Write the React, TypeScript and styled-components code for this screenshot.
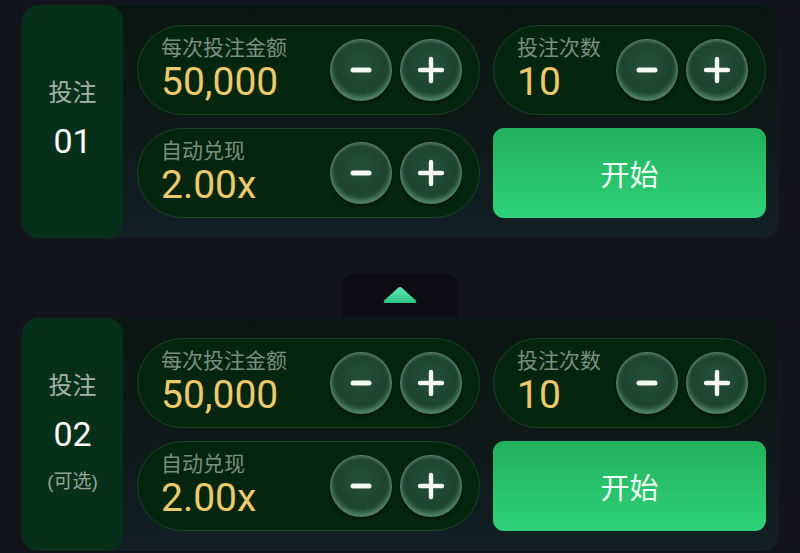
import styled, { createGlobalStyle } from 'styled-components';

const GlobalStyle = createGlobalStyle`
  html, body {
    margin: 0;
    padding: 0;
    background: #13131c;
  }
  body {
    font-family: "Liberation Sans", "Noto Sans CJK SC", sans-serif;
  }
`;

type BetSlot = {
  id: string;
  optional?: boolean;
};

const slots: BetSlot[] = [{ id: '01' }, { id: '02', optional: true }];

const MinusIcon = () => (
  <svg width="24" height="24" viewBox="0 0 24 24">
    <line x1="4" y1="12" x2="20" y2="12" stroke="#f4f7f4" strokeWidth="5" strokeLinecap="round" />
  </svg>
);

const PlusIcon = () => (
  <svg width="28" height="28" viewBox="0 0 28 28">
    <line x1="3" y1="14" x2="25" y2="14" stroke="#f4f7f4" strokeWidth="4.4" strokeLinecap="round" />
    <line x1="14" y1="3" x2="14" y2="25" stroke="#f4f7f4" strokeWidth="4.4" strokeLinecap="round" />
  </svg>
);

const Stepper = ({ label, value }: { label: string; value: string }) => (
  <Field>
    <FieldText>
      <Label>{label}</Label>
      <Value>{value}</Value>
    </FieldText>
    <RoundButton aria-label="decrease">
      <MinusIcon />
    </RoundButton>
    <RoundButton aria-label="increase">
      <PlusIcon />
    </RoundButton>
  </Field>
);

const BetPanel = ({ slot }: { slot: BetSlot }) => (
  <Panel>
    <Side>
      <SideTitle>投注</SideTitle>
      <SideNumber>{slot.id}</SideNumber>
      {slot.optional && <SideNote>(可选)</SideNote>}
    </Side>
    <Controls>
      <Stepper label="每次投注金额" value="50,000" />
      <Stepper label="投注次数" value="10" />
      <Stepper label="自动兑现" value="2.00x" />
      <StartButton>开始</StartButton>
    </Controls>
  </Panel>
);

const App = () => {
  return (
    <>
      <GlobalStyle />
      <Page>
        <BetPanel slot={slots[0]} />
        <Collapse>
          <svg width="36" height="18" viewBox="0 0 36 18">
            <defs>
              <linearGradient id="arrowFill" x1="0" y1="0" x2="0" y2="1">
                <stop offset="0" stopColor="#5be6b0" />
                <stop offset="1" stopColor="#2fc488" />
              </linearGradient>
            </defs>
            <path
              d="M15.6 2.2 Q18 0 20.4 2.2 L33.6 14.2 Q35.6 16.6 32.6 17 L3.4 17 Q0.4 16.6 2.4 14.2 Z"
              fill="url(#arrowFill)"
            />
          </svg>
        </Collapse>
        <BetPanel slot={slots[1]} />
      </Page>
    </>
  );
};

export default App;

const Page = styled.div`
  padding: 5px 22px 0 22px;
  display: flex;
  flex-direction: column;
  align-items: stretch;
`;

const Panel = styled.div`
  display: flex;
  height: 233px;
  border-radius: 16px;
  background: linear-gradient(180deg, #0a1611 0%, #0e1a19 60%, #122026 100%);
  box-shadow: 0 0 0 1px rgba(20, 40, 40, 0.35);
  overflow: hidden;
`;

const Side = styled.div`
  width: 101px;
  flex-shrink: 0;
  box-sizing: border-box;
  padding-bottom: 6px;
  background: #07301a;
  border-radius: 16px;
  display: flex;
  flex-direction: column;
  align-items: center;
  justify-content: center;
  gap: 14px;
`;

const SideTitle = styled.div`
  font-size: 24px;
  line-height: 30px;
  color: #a3b4a7;
`;

const SideNumber = styled.div`
  font-family: Roboto, "Noto Sans CJK SC", sans-serif;
  font-size: 34px;
  line-height: 38px;
  color: #ffffff;
`;

const SideNote = styled.div`
  font-size: 19px;
  line-height: 22px;
  color: #93a397;
  margin-top: 4px;
`;

const Controls = styled.div`
  flex: 1;
  display: grid;
  grid-template-columns: 343px 273px;
  grid-template-rows: 90px 90px;
  gap: 13px;
  padding: 20px 12px 20px 14px;
`;

const Field = styled.div`
  display: flex;
  align-items: center;
  gap: 8px;
  padding: 0 17px 0 23px;
  border-radius: 45px;
  background: #04260f;
  border: 1px solid #1c4327;
`;

const FieldText = styled.div`
  flex: 1;
  display: flex;
  flex-direction: column;
  padding-bottom: 4px;
`;

const Label = styled.div`
  font-size: 21px;
  line-height: 25px;
  color: #7b8f80;
`;

const Value = styled.div`
  font-family: Roboto, "Liberation Sans", sans-serif;
  font-size: 39px;
  line-height: 38px;
  margin-top: 3px;
  color: #ecc96d;
`;

const RoundButton = styled.button`
  width: 62px;
  height: 62px;
  flex-shrink: 0;
  padding: 0;
  border-radius: 50%;
  border: 1px solid rgba(170, 220, 190, 0.35);
  display: flex;
  align-items: center;
  justify-content: center;
  background: radial-gradient(
    circle at 50% 42%,
    #24503a 0%,
    #1c4430 55%,
    #2a5a40 82%,
    #4f8065 100%
  );
  box-shadow: inset 0 2px 2px rgba(255, 255, 255, 0.18),
    inset 0 -3px 4px rgba(200, 255, 220, 0.28), 0 2px 4px rgba(0, 0, 0, 0.45);
  cursor: pointer;
`;

const StartButton = styled.button`
  border: none;
  border-radius: 11px;
  background: linear-gradient(180deg, #23b05c 0%, #2ed279 100%);
  color: #effff3;
  font-family: "Liberation Sans", "Noto Sans CJK SC", sans-serif;
  font-size: 29px;
  cursor: pointer;
`;

const Collapse = styled.div`
  align-self: center;
  margin-top: 35px;
  width: 114px;
  height: 45px;
  box-sizing: border-box;
  padding-top: 13px;
  display: flex;
  justify-content: center;
  align-items: flex-start;
  background: #0c0c12;
  border-radius: 12px 12px 0 0;
`;
